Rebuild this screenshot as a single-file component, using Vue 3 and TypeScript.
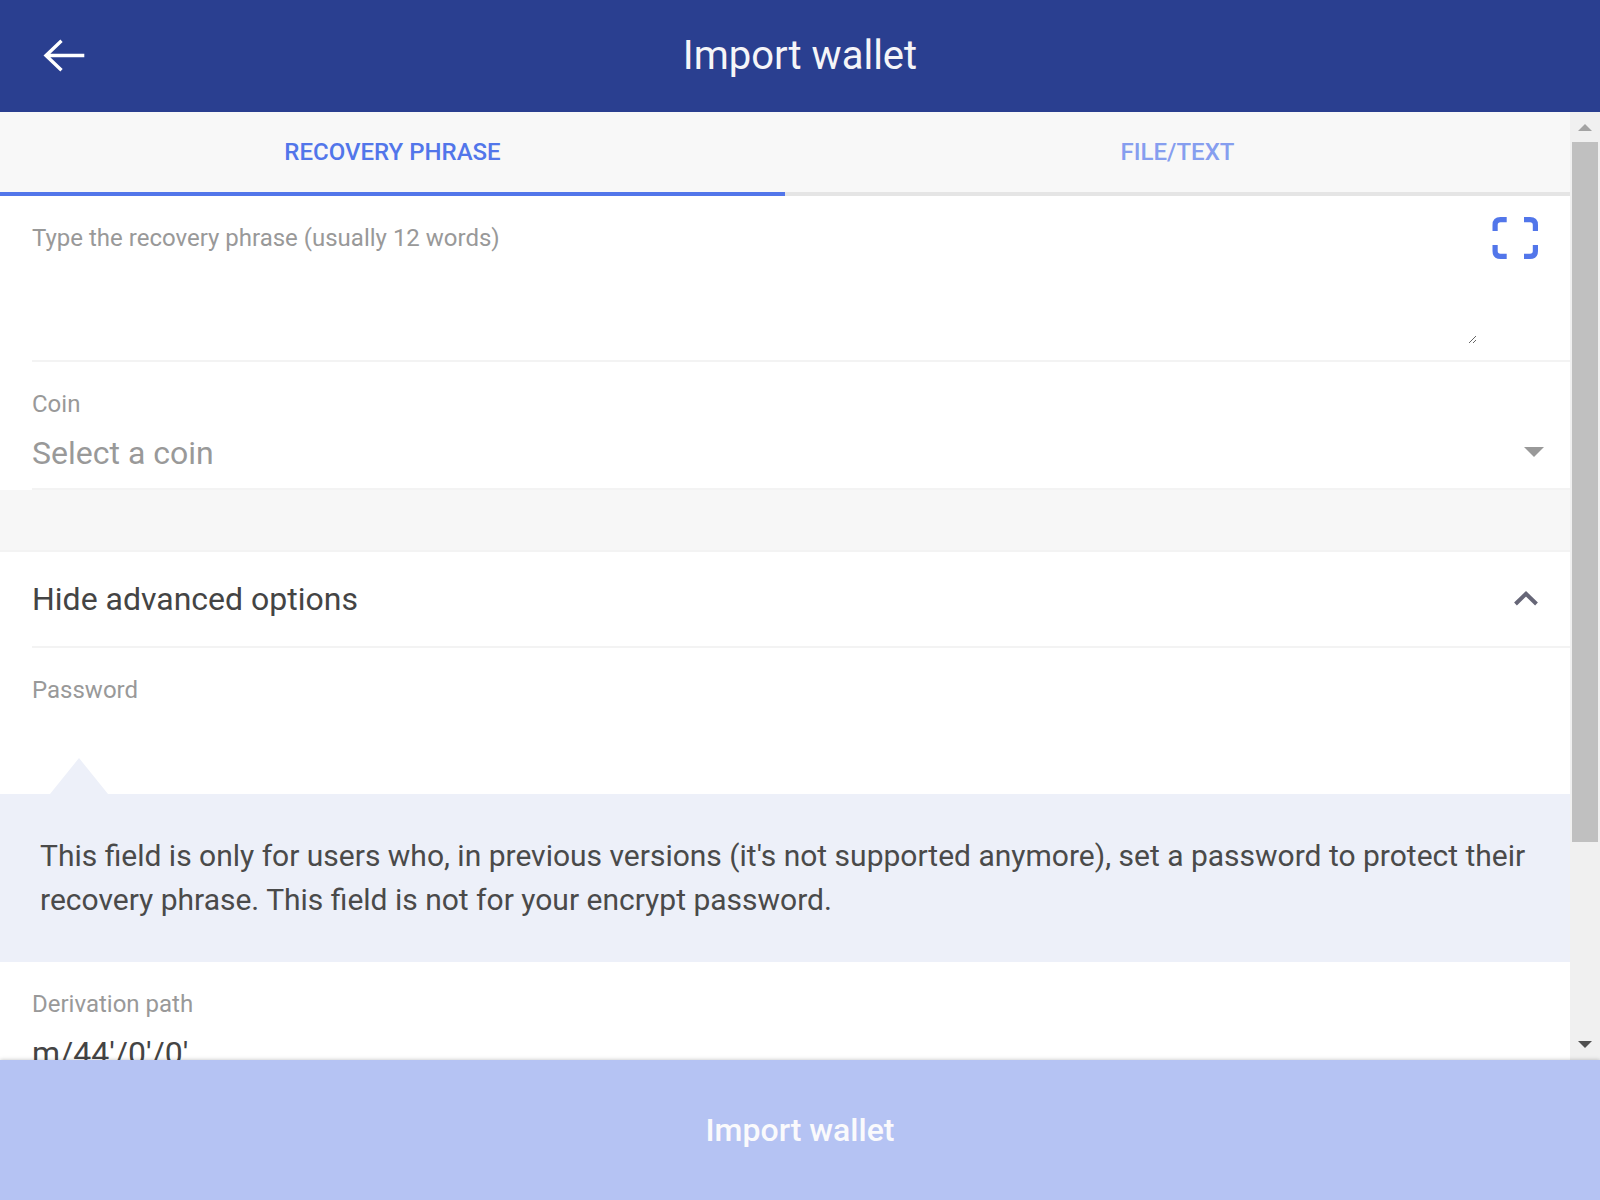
<script setup lang="ts">
import { ref } from 'vue'

type Tab = 'phrase' | 'file'

const tabs: { id: Tab; label: string }[] = [
  { id: 'phrase', label: 'Recovery phrase' },
  { id: 'file', label: 'File/Text' },
]
const activeTab = ref<Tab>('phrase')
const phrase = ref('')
const coin = ref('')
const password = ref('')
const derivationPath = ref("m/44'/0'/0'")
const showAdvanced = ref(true)
</script>

<template>
  <div class="app">
    <header class="toolbar">
      <button class="icon-button back" type="button" aria-label="Back">
        <svg width="42" height="34" viewBox="0 0 42 34" fill="none" stroke="#fff" stroke-width="3.4">
          <path d="M18.500 1.800 3 16.500l15.500 14.700M3 16.500H41.300" />
        </svg>
      </button>
      <h1>Import wallet</h1>
    </header>

    <div class="body">
      <main class="content">
        <nav class="tabs" role="tablist">
          <button
            v-for="tab in tabs"
            :key="tab.id"
            type="button"
            role="tab"
            class="tab"
            :class="{ active: tab.id === activeTab }"
            :aria-selected="tab.id === activeTab"
            @click="activeTab = tab.id"
          >
            {{ tab.label }}
          </button>
        </nav>

        <div class="list">
          <div class="item">
            <div class="item-inner phrase-row">
              <div class="field">
                <label for="phrase">Type the recovery phrase (usually 12 words)</label>
                <textarea id="phrase" v-model="phrase"></textarea>
              </div>
              <button class="icon-button scan" type="button" aria-label="Scan">
                <svg width="46" height="42" viewBox="0 0 46 42" fill="none" stroke="#5276ea" stroke-width="5.2">
                  <path d="M14.700 2.600H8.500Q3.100 2.600 3.100 8v6M32 2.600h6q5.400 0 5.400 5.400v6M14.700 39.400H8.500q-5.400 0-5.400-5.400v-6M32 39.400h6q5.400 0 5.400-5.400v-6" />
                </svg>
              </button>
            </div>
          </div>

          <div class="item">
            <div class="item-inner">
              <label for="coin">Coin</label>
              <div class="select-row">
                <select id="coin" v-model="coin" class="control">
                  <option value="" disabled>Select a coin</option>
                </select>
                <svg class="caret" width="20" height="10" viewBox="0 0 20 10" aria-hidden="true">
                  <path d="M0 0h20L10 10z" fill="#999" />
                </svg>
              </div>
            </div>
          </div>
        </div>

        <div class="divider"></div>

        <div class="list">
          <button class="item toggle" type="button" :aria-expanded="showAdvanced" @click="showAdvanced = !showAdvanced">
            <span class="toggle-inner">
              <span>{{ showAdvanced ? 'Hide' : 'Show' }} advanced options</span>
              <svg width="24" height="16" viewBox="0 0 24 16" fill="none" stroke="#667" stroke-width="4" aria-hidden="true">
                <path d="M1.500 13 12 2.800 22.500 13" />
              </svg>
            </span>
          </button>

          <template v-if="showAdvanced">
            <div class="item">
              <div class="item-inner password-row">
                <label for="password">Password</label>
                <input id="password" v-model="password" class="control" type="password" />
              </div>
            </div>
            <p class="note">
              This field is only for users who, in previous versions (it's not supported anymore), set a password to
              protect their recovery phrase. This field is not for your encrypt password.
            </p>
            <div class="item">
              <div class="item-inner">
                <label for="path">Derivation path</label>
                <input id="path" v-model="derivationPath" class="control" type="text" />
              </div>
            </div>
          </template>
        </div>
      </main>

      <div class="scrollbar" aria-hidden="true">
        <svg class="scroll-arrow" width="14" height="7" viewBox="0 0 14 7"><path d="M7 0 14 7H0z" fill="#a3a3a3" /></svg>
        <div class="thumb"></div>
        <div class="track"></div>
        <svg class="scroll-arrow down" width="14" height="7" viewBox="0 0 14 7"><path d="M0 0h14L7 7z" fill="#505050" /></svg>
      </div>
    </div>

    <button class="submit" type="button">Import wallet</button>
  </div>
</template>

<style>
body {
  margin: 0;
}
</style>

<style scoped>
* {
  box-sizing: border-box;
}

.app {
  display: flex;
  flex-direction: column;
  height: 100vh;
  background: #fff;
  color: #444;
  font-family: Roboto, "Liberation Sans", sans-serif;
  font-size: 32px;
}

button {
  border: 0;
  padding: 0;
  background: none;
  color: inherit;
  font: inherit;
  cursor: pointer;
}

svg {
  display: block;
  flex: none;
}

.toolbar {
  flex: none;
  display: grid;
  grid-template-columns: 1fr auto 1fr;
  align-items: center;
  height: 112px;
  background: #2a3f90;
  color: #f5f5f8;
}

.toolbar h1 {
  margin: 0;
  font-size: 40px;
  font-weight: 400;
  line-height: 48px;
}

.back {
  justify-self: start;
  margin-left: 43px;
}

.body {
  flex: 1;
  display: flex;
  min-height: 0;
}

.content {
  flex: 1;
  min-width: 0;
  overflow-y: auto;
  scrollbar-width: none;
}

.tabs {
  display: flex;
  background: #f8f8f8;
}

.tab {
  flex: 1;
  height: 84px;
  border-bottom: 4px solid #e5e5e5;
  color: #869eef;
  font-size: 24px;
  font-weight: 500;
  text-transform: uppercase;
}

.tab.active {
  border-color: #5276ea;
  color: #5276ea;
}

.item {
  display: block;
  width: 100%;
  padding-left: 32px;
}

.item-inner {
  padding: 28px 32px 16px 0;
  border-bottom: 2px solid #f3f3f3;
}

label {
  display: block;
  color: #999;
  font-size: 24px;
  line-height: 28px;
}

.phrase-row {
  display: flex;
  align-items: flex-start;
  gap: 15px;
}

.field {
  flex: 1;
}

textarea {
  display: block;
  width: 100%;
  height: 92px;
  border: 0;
  padding: 16px 0 0;
  outline: 0;
  background: none;
  color: inherit;
  font: inherit;
  resize: vertical;
}

.scan {
  margin-top: -7px;
}

.control {
  display: block;
  width: 100%;
  height: 38px;
  margin: 16px 0 0;
  border: 0;
  padding: 0;
  outline: 0;
  appearance: none;
  background: none;
  color: inherit;
  font: inherit;
  line-height: 38px;
}

.select-row {
  position: relative;
}

select.control {
  color: #999;
}

.caret {
  position: absolute;
  top: 13px;
  right: -6px;
  pointer-events: none;
}

.divider {
  height: 62px;
  border-bottom: 2px solid #f3f3f3;
  background: #f7f7f7;
}

.toggle-inner {
  display: flex;
  align-items: center;
  justify-content: space-between;
  height: 96px;
  padding-right: 32px;
  border-bottom: 2px solid #f3f3f3;
}

.password-row {
  padding-bottom: 36px;
  border-bottom: 0;
}

.note {
  position: relative;
  margin: 0;
  padding: 40px;
  background: #edf0f9;
  color: #4a4a4a;
  font-size: 30px;
  line-height: 44px;
}

.note::before {
  content: "";
  position: absolute;
  bottom: 100%;
  left: 50px;
  width: 58px;
  height: 36px;
  background: inherit;
  clip-path: polygon(50% 0, 100% 100%, 0 100%);
}

.scrollbar {
  flex: none;
  display: flex;
  flex-direction: column;
  width: 30px;
  padding: 0 2px;
  background: #f0f0f0;
}

.scroll-arrow {
  margin: 12px 6px 11px;
}

.scroll-arrow.down {
  margin: 11px 6px 12px;
}

.thumb {
  flex: 700;
  background: #c0c0c0;
}

.track {
  flex: 188;
}

.submit {
  position: relative;
  flex: none;
  height: 140px;
  background: #b5c3f3;
  box-shadow: 0 0 4px rgba(0, 0, 0, 0.25);
  color: #fafafc;
  font-weight: 500;
}
</style>
